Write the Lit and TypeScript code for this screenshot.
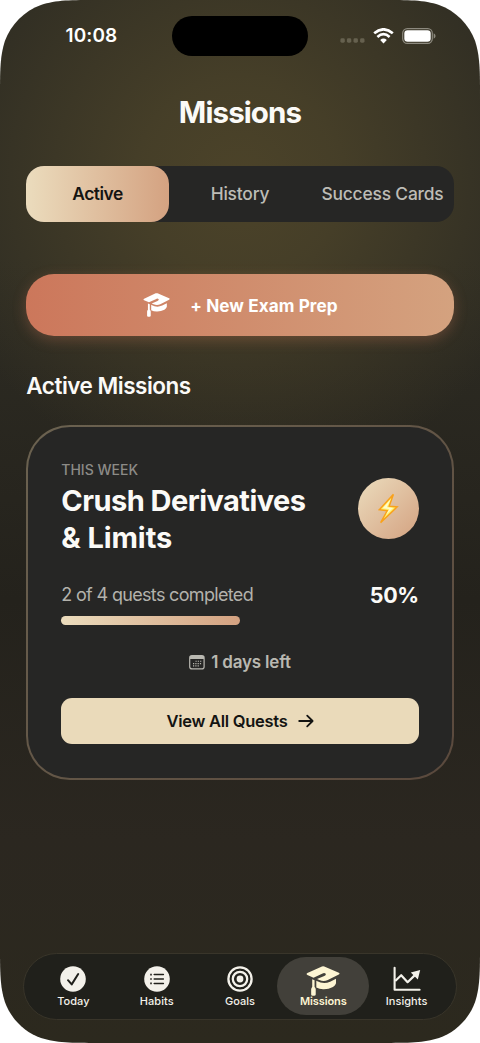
import { LitElement, html, css, svg } from "lit";
import { customElement, property } from "lit/decorators.js";
import { classMap } from "lit/directives/class-map.js";

const cap = svg`
  <path d="M13.6 .4Q14.6 0 15.6 .4L28 5.9Q29.3 6.6 28 7.4L18.6 12.4Q15 14 11.4 12.4L9.4 11.5L15.6 8.9Q17.6 7.6 16.6 6.5Q15.4 5.5 13.7 6.9L6.4 10.3L1.2 8Q-.2 7.1 1.2 6.2Z"/>
  <path d="M9.2 13.2Q15 16.6 20.6 13.8L25.6 11.2V15.2Q25.2 17 23 18.4Q19 20.6 14.6 20.4Q11.4 20.3 8.8 19V13Z"/>
  <path d="M5.3 11.6L7.3 12.5V18.4Q8.2 19.2 8.3 20.4V25Q8.2 26.2 6.9 26.2H5.7Q4.4 26.2 4.4 25V20.4Q4.5 19.2 5.3 18.4Z"/>`;

const glyphs: Record<string, unknown> = {
  today: svg`<svg width="26" height="26" viewBox="0 0 26 26"><circle cx="13" cy="13" r="12.8" fill="currentColor"/><path d="M8 14.2L11.7 18.4L18.2 8" fill="none" stroke="#20201b" stroke-width="2" stroke-linecap="round" stroke-linejoin="round"/></svg>`,
  habits: svg`<svg width="26" height="26" viewBox="0 0 26 26"><circle cx="13" cy="13" r="12.8" fill="currentColor"/><path d="M10.2 8.6H19.4M10.2 13H19.4M10.2 17.4H19.4" stroke="#20201b" stroke-width="1.5" stroke-linecap="round"/><path d="M6.2 8.6H7.8M6.2 13H7.8M6.2 17.4H7.8" stroke="#20201b" stroke-width="1.7"/></svg>`,
  goals: svg`<svg width="26" height="26" viewBox="0 0 26 26" fill="none" stroke="currentColor"><circle cx="13" cy="13" r="11.6" stroke-width="2.3"/><circle cx="13" cy="13" r="7.2" stroke-width="2.3"/><circle cx="13" cy="13" r="3.4" fill="currentColor" stroke="none"/></svg>`,
  missions: svg`<svg class="cap" width="34" height="30" viewBox="0 0 29 26.4" preserveAspectRatio="none" fill="currentColor">${cap}</svg>`,
  insights: svg`<svg width="28" height="26" viewBox="0 0 28 26" fill="none" stroke="currentColor"><path d="M1.6 1.8V23.8H26.6" stroke-width="2.1" stroke-linecap="round" stroke-linejoin="round"/><path d="M2.2 15L8.2 9.2L14.6 16.2L22.4 8.6" stroke-width="2.2" stroke-linejoin="round"/><path d="M17.8 6.4L27.2 4L24.8 13.4Z" fill="currentColor" stroke="none"/></svg>`,
};

@customElement("status-bar")
export class StatusBar extends LitElement {
  static styles = css`
    :host { display: grid; grid-template-columns: 172px 136px 1fr; height: 40px; padding-top: 15.5px; align-items: center; }
    .time { padding-left: 65.5px; font-size: 19px; font-weight: 600; letter-spacing: .1px; color: #fff; }
    .island { height: 40px; border-radius: 20px; background: #000; }
    .right { display: flex; align-items: center; padding-left: 32px; }
    .dots { margin: 10px 8px 0 0; }
    .wifi { margin-right: 8px; }
    svg { display: block; }
  `;
  render() {
    return html`
      <div class="time">10:08</div>
      <div class="island"></div>
      <div class="right">
        <svg class="dots" width="25" height="5" viewBox="0 0 25 5" fill="#66614f"><rect x=".4" y=".3" width="4.4" height="4.4" rx="1.4"/><rect x="6.9" y=".3" width="4.4" height="4.4" rx="1.4"/><rect x="13.5" y=".3" width="4.4" height="4.4" rx="1.4"/><rect x="20.1" y=".3" width="4.4" height="4.4" rx="1.4"/></svg>
        <svg class="wifi" width="21" height="16" viewBox="0 0 21 16" fill="none" stroke="#fff" stroke-width="2.7"><path d="M1.2 5.3Q10.5 -2.6 19.8 5.3"/><path d="M4.4 8.9Q10.5 3.5 16.6 8.9"/><path d="M10.5 15.4L7.2 11.9Q10.5 9 13.8 11.9Z" fill="#fff" stroke="none"/></svg>
        <svg width="34" height="16" viewBox="0 0 34 16"><rect x=".7" y=".6" width="29.6" height="14.8" rx="4.6" fill="none" stroke="#8c897e" stroke-width="1.2"/><rect x="2.3" y="2.2" width="26.4" height="11.6" rx="3.2" fill="#fff"/><path d="M31.7 5.3Q33.6 6.2 33.6 8Q33.6 9.8 31.7 10.7Z" fill="#8c897e"/></svg>
      </div>`;
  }
}

@customElement("segment-tabs")
export class SegmentTabs extends LitElement {
  static styles = css`
    :host { display: grid; grid-template-columns: repeat(3, 1fr); height: 56px; border-radius: 18px; background: #262625; }
    .tab { display: flex; align-items: center; justify-content: center; border-radius: 18px; color: #bdbcb6; font-size: 17.4px; font-weight: 500; white-space: nowrap; letter-spacing: -.18px; }
    .on { background: linear-gradient(90deg, #ebdcbd, #d4a281); color: #141412; letter-spacing: -.5px; font-weight: 600; }
  `;
  render() {
    return ["Active", "History", "Success Cards"].map(
      (t, i) => html`<div class=${classMap({ tab: true, on: i === 0 })}>${t}</div>`);
  }
}

@customElement("mission-card")
export class MissionCard extends LitElement {
  @property({ type: Number }) done = 2;
  @property({ type: Number }) total = 4;
  static styles = css`
    :host { display: flex; flex-direction: column; box-sizing: border-box; height: 354.5px; padding: 34px 33px 33px; border-radius: 44px; border: 2px solid transparent;
      background: linear-gradient(#262625, #262625) padding-box, linear-gradient(135deg, #6b6250, #5a493d) border-box; }
    .head { display: flex; justify-content: space-between; }
    .eyebrow { font-size: 14px; line-height: 17px; font-weight: 500; color: #8c8b87; letter-spacing: 0; }
    .title { margin-top: 5px; font-size: 29px; line-height: 36.7px; font-weight: 700; letter-spacing: -.54px; color: #fbfaf7; }
    .tail { letter-spacing: -.1px; }
    .badge { display: flex; align-items: center; justify-content: center; width: 61px; height: 61px; margin-top: 16.5px; border-radius: 50%; background: linear-gradient(135deg, #ebdcbd, #d4a281); }
    .count { display: flex; justify-content: space-between; align-items: center; height: 28px; margin-top: 24.5px; color: #b3b2ac; font-size: 18px; letter-spacing: -.67px; }
    .pct { font-size: 21.5px; font-weight: 700; letter-spacing: -.4px; color: #fbfaf7; }
    .track { height: 9px; margin-top: 7.5px; }
    .bar { height: 9px; border-radius: 5px; background: linear-gradient(90deg, #ebdcbd, #d4a281); }
    .left { display: flex; align-items: center; justify-content: center; gap: 6px; height: 22px; margin-top: 26px; font-size: 17px; font-weight: 600; letter-spacing: -.2px; color: #b9b8b1; }
    .cta { display: flex; align-items: center; justify-content: center; gap: 10px; height: 46px; margin-top: 25px; border-radius: 11px; background: #eadaba; color: #141412; font-size: 16.5px; font-weight: 600; letter-spacing: -.26px; }
  `;
  render() {
    const pct = (this.done / this.total) * 100;
    return html`
      <div class="head">
        <div>
          <div class="eyebrow">THIS WEEK</div>
          <div class="title">Crush Derivatives<br><span class="tail">&amp; Limits</span></div>
        </div>
        <div class="badge">
          <svg width="21" height="31" viewBox="0 0 24 32" preserveAspectRatio="none"><path d="M17.6 1.4L1.6 17.2L10.6 18.2L3 30.6L21.8 14.4L12.8 13.6Z" fill="#fff36e" stroke="#f9a11b" stroke-width="1.6" stroke-linejoin="miter"/><path d="M14.5 6.5L5.4 15.8L13 16.5L9.2 22.5L17.2 15.6L10 14.8Z" fill="#fffbd0"/></svg>
        </div>
      </div>
      <div class="count"><span>${this.done} of ${this.total} quests completed</span><span class="pct">${pct}%</span></div>
      <div class="track"><div class="bar" style="width:${pct}%"></div></div>
      <div class="left">
        <svg width="16" height="15" viewBox="0 0 16 15"><rect x=".7" y=".7" width="14.4" height="13.2" rx="2.2" fill="none" stroke="currentColor" stroke-width="1.2"/><path d="M1 1H15V4H1Z" fill="currentColor"/><path d="M6.5 6.3H13M4 8.6H13M4 10.9H10.6" stroke="currentColor" stroke-width="1.1" stroke-dasharray="1.2 1.1"/></svg>
        <span>1 days left</span>
      </div>
      <div class="cta"><span>View All Quests</span>
        <svg width="16" height="14" viewBox="0 0 16 14" fill="none" stroke="currentColor" stroke-width="1.8" stroke-linecap="round" stroke-linejoin="round"><path d="M1.2 7H14.4M9.2 1.6L14.6 7L9.2 12.4"/></svg>
      </div>`;
  }
}

@customElement("tab-bar")
export class TabBar extends LitElement {
  static styles = css`
    :host { display: grid; grid-template-columns: repeat(5, 83.3px); justify-content: center; box-sizing: border-box; height: 67px; border-radius: 34px; border: 1px solid #39352a; background: #20201b; }
    .item { display: flex; flex-direction: column; align-items: center; height: 58px; margin: 3.5px -4.4px; padding-top: 8.5px; box-sizing: border-box; border-radius: 29px; color: #f3f1ea; font-size: 11px; font-weight: 500; letter-spacing: .04px; }
    .icon { display: flex; justify-content: center; height: 26px; }
    .label { margin-top: 2.5px; line-height: 14px; }
    .on { background: #42403a; color: #fdf5d3; font-weight: 600; letter-spacing: -.1px; }
    .cap { flex: none; }
  `;
  render() {
    return ["Today", "Habits", "Goals", "Missions", "Insights"].map(
      (t) => html`<div class=${classMap({ item: true, on: t === "Missions" })}>
        <div class="icon">${glyphs[t.toLowerCase()]}</div><div class="label">${t}</div></div>`);
  }
}

@customElement("app-root")
export class AppRoot extends LitElement {
  static styles = css`
    :host { display: block; height: 1043px; background: #fff; font-family: Inter, "Liberation Sans", sans-serif; }
    .phone { display: flex; flex-direction: column; box-sizing: border-box; width: 480px; height: 1043px;
      clip-path: path("M0 99C0 70.7 0 56.4 4.9 41C11 24.2 24.2 11 41 4.9C56.4 0 70.7 0 99 0H381C409.3 0 423.6 0 439 4.9C455.8 11 469 24.2 475.1 41C480 56.4 480 70.7 480 99V944C480 972.3 480 986.6 475.1 1002C469 1018.8 455.8 1032 439 1038.1C423.6 1043 409.3 1043 381 1043H99C70.7 1043 56.4 1043 41 1038.1C24.2 1032 11 1018.8 4.9 1002C0 986.6 0 972.3 0 944Z");
      background: radial-gradient(circle at 240px 180px, rgba(90,78,44,.68) 0, rgba(88,77,44,.56) 100px, rgba(76,70,44,0) 310px), linear-gradient(#2e2c23 0, #2e2c23 260px, #24221c 600px, #2b2720 840px, #2c291e 1043px); }
    .heading { margin-top: 37px; height: 38px; line-height: 38px; text-align: center; font-size: 29.5px; font-weight: 700; letter-spacing: -.9px; color: #fbfaf7; }
    .body { padding: 35px 26.3px 0; }
    .new { display: flex; align-items: center; justify-content: center; gap: 20px; height: 62px; margin-top: 52.5px; border-radius: 28px; color: #fff; font-size: 17.2px; font-weight: 700; letter-spacing: .07px; background: linear-gradient(90deg, #cc775b, #d4a27f); box-shadow: 0 4px 14px rgba(204,119,91,.3); }
    .new svg { margin-left: 1px; }
    .section { margin: 34px 0 23px; height: 32px; line-height: 32px; font-size: 22.5px; font-weight: 600; letter-spacing: -.5px; color: #fbfaf7; }
    .dock { margin: auto 23px 23.5px; }
  `;
  render() {
    return html`<div class="phone">
      <status-bar></status-bar>
      <div class="heading">Missions</div>
      <div class="body">
        <segment-tabs></segment-tabs>
        <div class="new"><svg width="27" height="24" viewBox="0 0 29 26.4" preserveAspectRatio="none" fill="#fff">${cap}</svg><span>+ New Exam Prep</span></div>
        <div class="section">Active Missions</div>
        <mission-card done="2" total="4"></mission-card>
      </div>
      <tab-bar class="dock"></tab-bar>
    </div>`;
  }
}
